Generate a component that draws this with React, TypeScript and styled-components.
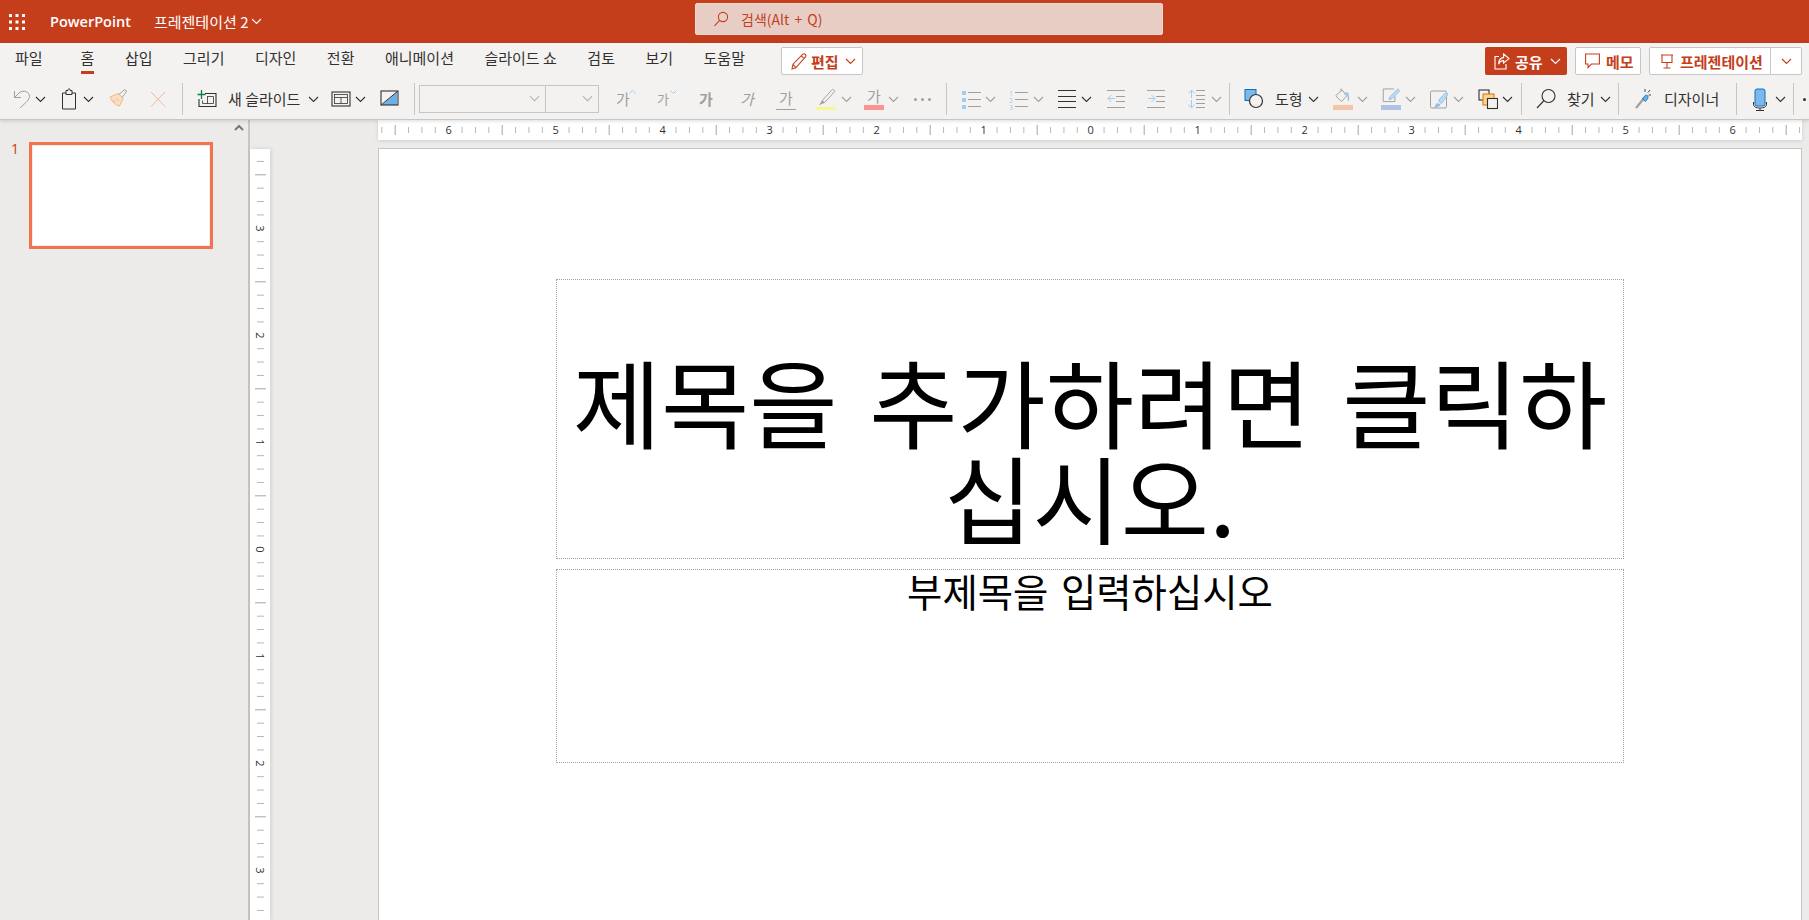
import React, { FC, ReactNode } from 'react'
import styled, { createGlobalStyle } from 'styled-components'

const RED = '#c43e1c'
const DARK = '#323130'
const GRAY = '#a19f9d'
const BLUE = '#a0cdf0'
const KR = `"Noto Sans CJK KR", "Noto Sans", sans-serif`

const Global = createGlobalStyle`
  html, body { margin: 0; padding: 0; height: 100%; overflow: hidden; background: #edebe9; }
  #root { height: 100%; }
`

/* ---------- small drawings ---------- */

const Chevron: FC<{ $ml?: number, muted?: boolean, color?: string }> = ({ $ml = 0, muted, color }) => (
  <S.ChevronBox $ml={$ml}>
    <svg width="11" height="7" viewBox="0 0 11 7" fill="none">
      <path d="M1 1l4.5 4.5L10 1" stroke={color || (muted ? GRAY : DARK)} strokeWidth="1.1" />
    </svg>
  </S.ChevronBox>
)

const Ico: FC<{ $ml?: number, children: ReactNode }> = ({ $ml = 0, children }) => (
  <S.IconBox $ml={$ml}>
    <svg width="20" height="24" viewBox="0 0 20 24" fill="none">{children}</svg>
  </S.IconBox>
)

const lines = (x: number, w: number, ys: number[], c: string) =>
  ys.map(y => <path key={y} d={`M${x} ${y + 0.5}h${w}`} stroke={c} />)

const Waffle = () => (
  <svg width="16" height="16" viewBox="0 0 16 16" fill="#fff">
    {[0, 6.5, 13].flatMap(y => [0, 6.5, 13].map(x => <rect key={`${x}-${y}`} x={x} y={y} width="3" height="3" />))}
  </svg>
)

const HRuler = () => {
  const marks = []
  for (let i = -53; i <= 53; i++) {
    const x = 712.7 + i * 13.375
    if (i % 8 === 0) {
      marks.push(<text key={i} x={x} y="14" textAnchor="middle" fontSize="11" fontFamily="Open Sans, sans-serif" fill={DARK}>{Math.abs(i / 8)}</text>)
    } else {
      const long = i % 4 === 0
      marks.push(<path key={i} d={`M${x} ${long ? 5 : 7}v${long ? 10 : 6}`} stroke={long ? '#a8a6a4' : '#b8b6b4'} />)
    }
  }
  return <svg width="1424" height="20" viewBox="0 0 1424 20">{marks}</svg>
}

const VRuler = () => {
  const marks = []
  for (let i = -29; i <= 28; i++) {
    const y = 400.3 + i * 13.375
    if (i % 8 === 0) {
      marks.push(<text key={i} x="10" y={y + 4} transform={`rotate(90 10 ${y})`} textAnchor="middle" fontSize="11" fontFamily="Open Sans, sans-serif" fill={DARK}>{Math.abs(i / 8)}</text>)
    } else {
      const long = i % 4 === 0
      marks.push(<path key={i} d={`M${long ? 5 : 7} ${y}h${long ? 11 : 7}`} stroke={long ? '#a8a6a4' : '#b8b6b4'} />)
    }
  }
  return <svg width="20" height="771" viewBox="0 0 20 771">{marks}</svg>
}

const Caret: FC<{ down?: boolean }> = ({ down }) => (
  <S.CaretBox>
    <svg width="7" height="4" viewBox="0 0 7 4" fill="none">
      <path d={down ? 'M.5.5l3 3 3-3' : 'M.5 3.500l3-3 3 3'} stroke={BLUE} />
    </svg>
  </S.CaretBox>
)

/* ---------- page ---------- */

export default function App() {
  return (
    <>
      <Global />
      <S.Page>
        <S.TitleBar>
          <S.TitleLeft>
            <Waffle />
            <S.AppName>PowerPoint</S.AppName>
            <S.DocName>프레젠테이션 2</S.DocName>
            <Chevron $ml={3} color="#fff" />
          </S.TitleLeft>
          <S.SearchBox>
            <svg width="16" height="16" viewBox="0 0 16 16" fill="none" stroke={RED} strokeWidth="1.1">
              <circle cx="10" cy="6" r="4.6" />
              <path d="M6.6 9.4L1.5 14.8" />
            </svg>
            <span>검색(Alt + Q)</span>
          </S.SearchBox>
        </S.TitleBar>

        <S.Ribbon>
          <S.TabRow>
            <S.Tab>파일</S.Tab>
            <S.Tab $active>홈</S.Tab>
            <S.Tab>삽입</S.Tab>
            <S.Tab>그리기</S.Tab>
            <S.Tab>디자인</S.Tab>
            <S.Tab>전환</S.Tab>
            <S.Tab>애니메이션</S.Tab>
            <S.Tab>슬라이드 쇼</S.Tab>
            <S.Tab>검토</S.Tab>
            <S.Tab>보기</S.Tab>
            <S.Tab>도움말</S.Tab>
            <S.EditButton>
              <svg width="16" height="17" viewBox="0 0 16 17" fill="none" stroke={RED} strokeWidth="1.1">
                <path d="M1 16l1-4.8L11.6 1.4c.9-.9 2-.7 2.7 0s.8 1.8 0 2.7L4.8 14.8 1 16zM2 11.4l2.8 3.2M10.4 2.8l3 3" />
              </svg>
              <span>편집</span>
              <Chevron $ml={2} color={RED} />
            </S.EditButton>
            <S.ActionGroup>
              <S.ShareButton>
                <svg width="16" height="17" viewBox="0 0 16 17" fill="none" stroke="#fff" strokeWidth="1.1">
                  <path d="M5 3.500H1v12.500h11V11" />
                  <path d="M9.600 1l5.400 4.600-5.400 4.400V7.600c-2.600 0-4 1-5 3.600 0-4.600 1.800-6.400 5-6.600V1z" />
                </svg>
                <span>공유</span>
                <Chevron $ml={2} color="#fff" />
              </S.ShareButton>
              <S.MemoButton>
                <svg width="15" height="16" viewBox="0 0 15 16" fill="none" stroke={RED} strokeWidth="1.1">
                  <path d="M.6 1h13.800v10H6.400L3 14.600V11H.6z" />
                </svg>
                <span>메모</span>
              </S.MemoButton>
              <S.PresentGroup>
                <S.PresentMain>
                  <svg width="14" height="15" viewBox="0 0 14 15" fill="none" stroke={RED} strokeWidth="1.1">
                    <path d="M1 1h12M2 1v7.500h10V1M7 8.500V14M3.500 14h7" />
                  </svg>
                  <span>프레젠테이션</span>
                </S.PresentMain>
                <S.PresentMore><Chevron color={RED} /></S.PresentMore>
              </S.PresentGroup>
            </S.ActionGroup>
          </S.TabRow>

          <S.ToolRow>
            <Ico $ml={12}>
              <path d="M2.500 4v6.500H9M2.500 10.500L7 6c4-3.400 10.500-1.600 10.500 3.400 0 2.600-2 4.500-3.500 6L8 21" stroke={GRAY} />
            </Ico>
            <Chevron $ml={3} />
            <Ico $ml={14}>
              <path d="M6 6H2.500v16h13V6H12M6 7.500V3.500h2c0-2.400 2-2.400 2.200 0H12v4z" stroke={DARK} />
            </Ico>
            <Chevron $ml={3} />
            <Ico $ml={14}>
              <path d="M2 10l8.500-3.500 4.500 5-3.500 7.500c-3.500-.5-7.500-4-9.500-9z" fill="#f9dfc6" stroke="#efb681" />
              <path d="M5 13l3 2M8 11l3 3" stroke="#efb681" />
              <path d="M11 7.500l5-4.500c1-.8 3 .8 2.300 2L14 10.500" stroke={GRAY} />
            </Ico>
            <Ico $ml={20}>
              <path d="M3 5l14 14.500M17 5L3 19.500" stroke="#f3b4a6" />
            </Ico>
            <S.Divider $ml={14} />

            <Ico $ml={14}>
              <path d="M8 6.500h11v13H2V12" stroke={DARK} strokeWidth="1.100" />
              <path d="M10 9.500h6.500v7h-11v-3M10.500 9.500v7" stroke={DARK} strokeWidth=".8" />
              <path d="M4.500 3v9M.5 7.500h8" stroke="#107c41" strokeWidth="1.300" />
            </Ico>
            <S.ToolLabel $ml={11} $w={72}>새 슬라이드</S.ToolLabel>
            <Chevron $ml={8} />
            <Ico $ml={12}>
              <rect x="1" y="5" width="18" height="14" stroke={DARK} strokeWidth="1.1" />
              <rect x="3.500" y="7.500" width="13" height="9" stroke={DARK} strokeWidth=".8" />
              <path d="M3.500 10.500h13M10 10.500v6" stroke={DARK} strokeWidth=".8" />
            </Ico>
            <Chevron $ml={4} />
            <Ico $ml={14}>
              <path d="M2 18L17 4.500V18z" fill="#6cb0ea" />
              <rect x="1" y="4" width="17" height="14" stroke={DARK} strokeWidth="1.1" />
              <path d="M1 18L18 4" stroke={DARK} />
            </Ico>
            <S.Divider $ml={14} />

            <S.FontName />
            <S.FontSize />

            <S.Glyph $ml={17} $left>가<Caret /></S.Glyph>
            <S.Glyph $ml={21} $left $small>가<Caret down /></S.Glyph>
            <S.Glyph $ml={19} $bold>가</S.Glyph>
            <S.Glyph $ml={21} $italic>가</S.Glyph>
            <S.Glyph $ml={19} $under>가</S.Glyph>
            <S.ColorTool $ml={20} $bar="#f9f58f">
              <svg width="20" height="20" viewBox="0 0 20 20" fill="none">
                <path d="M6 14L16 3c1.400-1.400 3.600.8 2.400 2.200L8.500 16 6 14z" stroke={GRAY} />
                <path d="M6 13.600L3 18.600l5.600-2.400z" fill={GRAY} />
              </svg>
            </S.ColorTool>
            <Chevron $ml={5} muted />
            <S.ColorTool $ml={12} $bar="#fb9393" $tall>
              <S.SmallGlyph>가</S.SmallGlyph>
            </S.ColorTool>
            <Chevron $ml={4} muted />
            <S.Dots $ml={13}><i /><i /><i /></S.Dots>
            <S.Divider $ml={14} />

            <Ico $ml={15}>
              <path d="M0 4h4v4H0zM0 11h4v4H0zM0 18h4v4H0z" fill={BLUE} />
              {lines(6, 13, [5, 12, 19], GRAY)}
            </Ico>
            <Chevron $ml={3} muted />
            <Ico $ml={13}>
              <text x="0" y="9" fontSize="7" fontFamily="Open Sans, sans-serif" fill={BLUE}>1</text>
              <text x="0" y="16" fontSize="7" fontFamily="Open Sans, sans-serif" fill={BLUE}>2</text>
              <text x="0" y="23" fontSize="7" fontFamily="Open Sans, sans-serif" fill={BLUE}>3</text>
              {lines(6, 13, [5, 12, 19], GRAY)}
            </Ico>
            <Chevron $ml={4} muted />
            <Ico $ml={13}>{lines(1, 18, [3, 9, 14, 20], DARK)}</Ico>
            <Chevron $ml={4} />
            <Ico $ml={14}>
              {lines(1, 18, [3, 20], GRAY)}
              {lines(10, 9, [9, 14], GRAY)}
              <path d="M5.500 8l-3.500 3.500 3.500 3.500M2 11.500h7" stroke={BLUE} />
            </Ico>
            <Ico $ml={20}>
              {lines(1, 18, [3, 20], GRAY)}
              {lines(10, 9, [9, 14], GRAY)}
              <path d="M5.500 8L9 11.500 5.500 15M2 11.500h7" stroke={BLUE} />
            </Ico>
            <Ico $ml={21}>
              {lines(9, 9, [3, 8, 12, 16, 20], GRAY)}
              <path d="M1.500 6.500l3-3.500 3 3.500M4.500 3v8M1.500 17.500l3 3.500 3-3.500M4.500 21v-8" stroke={BLUE} />
            </Ico>
            <Chevron $ml={4} muted />
            <S.Divider $ml={7} />

            <Ico $ml={14}>
              <rect x="1" y="2.500" width="11" height="11" fill="#7db8ec" stroke="#106ebe" />
              <circle cx="12" cy="14" r="6.500" fill="#f3f2f1" stroke={DARK} strokeWidth="1.2" />
            </Ico>
            <S.ToolLabel $ml={11} $w={27}>도형</S.ToolLabel>
            <Chevron $ml={6} />
            <S.ColorTool $ml={14} $bar="#f3c6a8" $tall>
              <svg width="20" height="18" viewBox="0 0 20 18" fill="none">
                <path d="M8 1.500v3M9 3l5 6-5.500 6-6-6z" stroke={GRAY} />
                <path d="M15.500 14c.5-3.500 0-6-2-7.500" stroke="#8dc1ec" strokeWidth="1.500" />
                <path d="M11.500 8.500l1.500-3 3 1.500" stroke="#8dc1ec" />
              </svg>
            </S.ColorTool>
            <Chevron $ml={4} muted />
            <S.ColorTool $ml={13} $bar="#aec3e3" $tall>
              <svg width="20" height="18" viewBox="0 0 20 18" fill="none">
                <path d="M13 2H2v13h12V9" stroke={GRAY} />
                <path d="M8 13l1-3 8-8 2 2-8 8z" fill="#bcdcf5" stroke="#8dc1ec" />
              </svg>
            </S.ColorTool>
            <Chevron $ml={4} muted />
            <Ico $ml={13}>
              <rect x="1.500" y="4" width="16" height="17" rx="1.500" stroke={GRAY} />
              <path d="M17 6c-2 1-5 4-7.500 8 1 1 2 2 3 2.500C14.500 13.500 18 9 19 7z" fill="#bcdcf5" stroke="#8dc1ec" />
              <path d="M4 21c2-.5 2-3 3.500-4.500 2-1 4 .5 4 1.500-1.500 2-4 3-7.500 3z" fill="#8dc1ec" />
            </Ico>
            <Chevron $ml={4} muted />
            <Ico $ml={14}>
              <rect x="1" y="3" width="10" height="10" stroke={DARK} strokeWidth="1.100" />
              <rect x="5" y="7" width="11" height="11" fill="#fad58f" stroke="#e47a11" strokeWidth="1.100" />
              <rect x="9.500" y="11.500" width="10" height="10" fill="#f3f2f1" stroke={DARK} strokeWidth="1.100" />
            </Ico>
            <Chevron $ml={4} />
            <S.Divider $ml={8} />

            <Ico $ml={14}>
              <circle cx="12.500" cy="9" r="6.500" stroke={DARK} strokeWidth="1.100" />
              <path d="M8 13.500L1 21" stroke={DARK} strokeWidth="1.100" />
            </Ico>
            <S.ToolLabel $ml={11} $w={27}>찾기</S.ToolLabel>
            <Chevron $ml={6} />
            <S.Divider $ml={7} />

            <Ico $ml={13}>
              <path d="M4 21l9-11" stroke={GRAY} strokeWidth="2.200" />
              <path d="M10.500 12l3 2.500 2.500-3.500c.6-2-1-3.200-2.500-2.800z" fill="#6cb0ea" stroke="#106ebe" strokeWidth=".8" />
              <path d="M13 2v3M18 3l-2 2.500M19 8h-2.500" stroke={DARK} strokeWidth=".9" />
            </Ico>
            <S.ToolLabel $ml={12} $w={54}>디자이너</S.ToolLabel>
            <S.Divider $ml={18} />

            <Ico $ml={13}>
              <rect x="5" y="2" width="10" height="17" rx="2" fill="#7db8ec" stroke="#106ebe" />
              <path d="M3.500 15v2c0 2.500 2 4 6.500 4s6.500-1.500 6.500-4v-2M10 21v2.500M6 23.500h8" stroke={DARK} />
            </Ico>
            <Chevron $ml={5} />
            <S.Divider $ml={7} />
            <S.CutMark />
          </S.ToolRow>
        </S.Ribbon>

        <S.Workspace>
          <S.Sidebar>
            <S.ScrollUp>
              <svg width="10" height="7" viewBox="0 0 10 7" fill="none">
                <path d="M1 6l4-4 4 4" stroke="#7a7876" strokeWidth="2" />
              </svg>
            </S.ScrollUp>
            <S.ThumbRow>
              <S.ThumbNumber>1</S.ThumbNumber>
              <S.Thumb />
            </S.ThumbRow>
          </S.Sidebar>
          <S.VerticalRuler><VRuler /></S.VerticalRuler>
          <S.Canvas>
            <S.HorizontalRuler><HRuler /></S.HorizontalRuler>
            <S.Slide>
              <S.TitleBox>
                <span>제목을 추가하려면 클릭하십시오.</span>
              </S.TitleBox>
              <S.SubtitleBox>부제목을 입력하십시오</S.SubtitleBox>
            </S.Slide>
          </S.Canvas>
        </S.Workspace>
      </S.Page>
    </>
  )
}

const S = {
  Page: styled.div`
    display: flex;
    flex-direction: column;
    height: 920px;
    overflow: hidden;
    font-family: ${KR};
    color: ${DARK};
  `,
  TitleBar: styled.div`
    display: flex;
    align-items: center;
    flex: none;
    height: 43px;
    background: ${RED};
    color: #fff;
  `,
    TitleLeft: styled.div`
      display: flex;
      align-items: center;
      width: 695px;
      padding-left: 9px;
      box-sizing: border-box;
    `,
    AppName: styled.span`
      margin-left: 25px;
      font: 600 14.5px "Open Sans", sans-serif;
    `,
    DocName: styled.span`
      margin-left: 23px;
      font-size: 15px;
    `,
    SearchBox: styled.div`
      display: flex;
      align-items: center;
      gap: 12px;
      box-sizing: border-box;
      width: 468px;
      height: 32px;
      margin-bottom: 5px;
      padding-left: 17px;
      border: 1px solid #ecd9d2;
      border-radius: 2px;
      background: #e8cdc5;
      color: ${RED};
      font-size: 14px;
      word-spacing: 2px;
    `,
  Ribbon: styled.div`
    flex: none;
    box-sizing: border-box;
    height: 77px;
    background: #f3f2f1;
    border-bottom: 1px solid #c8c6c4;
    box-shadow: 0 1px 4px rgba(0, 0, 0, .14);
    position: relative;
    z-index: 2;
  `,
    TabRow: styled.div`
      display: flex;
      align-items: flex-start;
      gap: 30.5px;
      box-sizing: border-box;
      height: 37px;
      padding: 4px 7px 0 15px;
    `,
      Tab: styled.span<{ $active?: boolean }>`
        position: relative;
        font-size: 15px;
        line-height: 22px;
        white-space: nowrap;
        margin-left: ${p => (p.$active ? '7.5px' : '0')};
        &::after {
          content: '';
          display: ${p => (p.$active ? 'block' : 'none')};
          position: absolute;
          left: 0;
          right: 0;
          top: 24px;
          height: 2.5px;
          background: ${RED};
        }
      `,
      EditButton: styled.button`
        display: flex;
        align-items: center;
        gap: 4px;
        box-sizing: border-box;
        width: 82px;
        height: 28px;
        margin-left: 5.5px;
        padding: 0 0 0 9px;
        border: 1px solid #c8c6c4;
        border-radius: 2px;
        background: #fff;
        color: ${RED};
        font: 700 15px ${KR};
      `,
      ActionGroup: styled.div`
        display: flex;
        gap: 8px;
        margin-left: auto;
      `,
        ShareButton: styled.button`
          display: flex;
          align-items: center;
          gap: 5px;
          box-sizing: border-box;
          width: 82px;
          height: 28px;
          padding: 0 0 0 9px;
          border: 0;
          border-radius: 2px;
          background: ${RED};
          color: #fff;
          font: 700 15px ${KR};
        `,
        MemoButton: styled.button`
          display: flex;
          align-items: center;
          gap: 6px;
          box-sizing: border-box;
          width: 66px;
          height: 28px;
          padding: 0 0 0 9px;
          border: 1px solid #c8c6c4;
          border-radius: 2px;
          background: #fff;
          color: ${RED};
          font: 700 15px ${KR};
        `,
        PresentGroup: styled.div`
          display: flex;
          box-sizing: border-box;
          width: 153px;
          height: 28px;
          border: 1px solid #c8c6c4;
          border-radius: 2px;
          background: #fff;
        `,
          PresentMain: styled.div`
            display: flex;
            align-items: center;
            gap: 6px;
            width: 121px;
            padding-left: 10px;
            box-sizing: border-box;
            border-right: 1px solid #c8c6c4;
            color: ${RED};
            font: 700 15px ${KR};
            white-space: nowrap;
          `,
          PresentMore: styled.div`
            display: flex;
            align-items: center;
            justify-content: center;
            flex: 1;
          `,
    ToolRow: styled.div`
      display: flex;
      align-items: center;
      box-sizing: border-box;
      height: 39px;
      padding-bottom: 1px;
      overflow: hidden;
    `,
      ChevronBox: styled.span<{ $ml: number }>`
        display: flex;
        flex: none;
        margin-left: ${p => p.$ml}px;
      `,
      IconBox: styled.span<{ $ml: number }>`
        display: flex;
        flex: none;
        width: 20px;
        margin-left: ${p => p.$ml}px;
      `,
      Divider: styled.span<{ $ml: number }>`
        flex: none;
        width: 1px;
        height: 32px;
        margin-left: ${p => p.$ml}px;
        background: #c8c6c4;
      `,
      ToolLabel: styled.span<{ $ml: number, $w: number }>`
        flex: none;
        width: ${p => p.$w}px;
        margin-left: ${p => p.$ml}px;
        margin-bottom: 2px;
        font-size: 15px;
        white-space: nowrap;
      `,
      FontName: styled.div`
        flex: none;
        box-sizing: border-box;
        width: 127px;
        height: 28px;
        margin-left: 4px;
        border: 1px solid #c8c6c4;
        position: relative;
        &::after {
          content: '';
          position: absolute;
          right: 7px;
          top: 7px;
          width: 6px;
          height: 6px;
          border: solid #b3b0ad;
          border-width: 0 1px 1px 0;
          transform: rotate(45deg);
        }
      `,
      FontSize: styled.div`
        flex: none;
        box-sizing: border-box;
        width: 53px;
        height: 28px;
        border: 1px solid #c8c6c4;
        border-left: 0;
        position: relative;
        &::after {
          content: '';
          position: absolute;
          right: 7px;
          top: 7px;
          width: 6px;
          height: 6px;
          border: solid #b3b0ad;
          border-width: 0 1px 1px 0;
          transform: rotate(45deg);
        }
      `,
      Glyph: styled.span<{ $ml: number, $left?: boolean, $small?: boolean, $bold?: boolean, $italic?: boolean, $under?: boolean }>`
        position: relative;
        flex: none;
        width: 20px;
        margin-left: ${p => p.$ml}px;
        color: ${GRAY};
        font-size: ${p => (p.$small ? 13 : 15)}px;
        font-weight: ${p => (p.$bold ? 700 : 400)};
        font-style: ${p => (p.$italic ? 'italic' : 'normal')};
        line-height: 20px;
        padding-bottom: ${p => (p.$under ? '1px' : '0')};
        text-align: ${p => (p.$left ? 'left' : 'center')};
        border-bottom: ${p => (p.$under ? `1px solid ${GRAY}` : '0')};
      `,
        CaretBox: styled.span`
          position: absolute;
          right: 0;
          top: 1px;
          display: flex;
        `,
      ColorTool: styled.span<{ $ml: number, $bar: string, $tall?: boolean }>`
        display: flex;
        flex-direction: column;
        align-items: center;
        justify-content: flex-end;
        box-sizing: border-box;
        flex: none;
        width: 20px;
        height: 24px;
        padding-bottom: 1.5px;
        margin-left: ${p => p.$ml}px;
        &::after {
          content: '';
          flex: none;
          width: 20px;
          height: ${p => (p.$tall ? 5 : 3)}px;
          background: ${p => p.$bar};
        }
      `,
        SmallGlyph: styled.span`
          color: ${GRAY};
          font-size: 15px;
          line-height: 18px;
        `,
      Dots: styled.span<{ $ml: number }>`
        display: flex;
        justify-content: space-between;
        flex: none;
        width: 17px;
        margin: 0 1.5px 0 ${p => p.$ml + 1.5}px;
        i {
          width: 3px;
          height: 3px;
          border-radius: 50%;
          background: ${GRAY};
        }
      `,
      CutMark: styled.span`
        flex: none;
        width: 3px;
        height: 3px;
        margin-left: 9px;
        border-radius: 50%;
        background: ${DARK};
      `,
  Workspace: styled.div`
    display: flex;
    flex: 1;
    min-height: 0;
    background: #edebe9;
  `,
    Sidebar: styled.div`
      flex: none;
      box-sizing: border-box;
      width: 250px;
      padding-top: 4px;
      border-right: 2px solid #c8c6c4;
    `,
      ScrollUp: styled.div`
        display: flex;
        justify-content: flex-end;
        padding-right: 4px;
        height: 18px;
      `,
      ThumbRow: styled.div`
        display: flex;
        align-items: flex-start;
        padding-left: 11px;
      `,
        ThumbNumber: styled.span`
          width: 18px;
          margin-top: -2px;
          color: ${RED};
          font: 14px/18px "Open Sans", sans-serif;
        `,
        Thumb: styled.div`
          box-sizing: border-box;
          width: 184px;
          height: 107px;
          border: 3px solid #f4734f;
          outline: 1px solid #efeeec;
          outline-offset: -4px;
          background: #fff;
        `,
    VerticalRuler: styled.div`
      flex: none;
      align-self: flex-end;
      width: 20px;
      height: 771px;
      background: #fff;
      box-shadow: 1px 0 4px rgba(0, 0, 0, .12);
      svg { display: block; }
    `,
    Canvas: styled.div`
      flex: 1;
      min-width: 0;
      padding: 0 7px 0 108px;
      display: flex;
      flex-direction: column;
      gap: 8px;
    `,
      HorizontalRuler: styled.div`
        flex: none;
        height: 20px;
        background: #fff;
        box-shadow: 0 1px 4px rgba(0, 0, 0, .12);
        svg { display: block; }
      `,
      Slide: styled.div`
        flex: 1;
        display: flex;
        flex-direction: column;
        gap: 10px;
        box-sizing: border-box;
        padding: 130px 177px 0;
        border: solid #c8c6c4;
        border-width: 1px 1px 0;
        background: #fff;
        color: #000;
      `,
        TitleBox: styled.div`
          display: flex;
          flex-direction: column;
          justify-content: flex-end;
          box-sizing: border-box;
          height: 280px;
          padding: 0 8px 14px;
          border: 1px dotted #a0a0a0;
          font-size: 96px;
          line-height: 96px;
          word-spacing: 10px;
          text-align: center;
        `,
        SubtitleBox: styled.div`
          box-sizing: border-box;
          height: 194px;
          border: 1px dotted #a0a0a0;
          font-size: 38.4px;
          line-height: 40px;
          word-spacing: 4px;
          text-align: center;
        `,
}
